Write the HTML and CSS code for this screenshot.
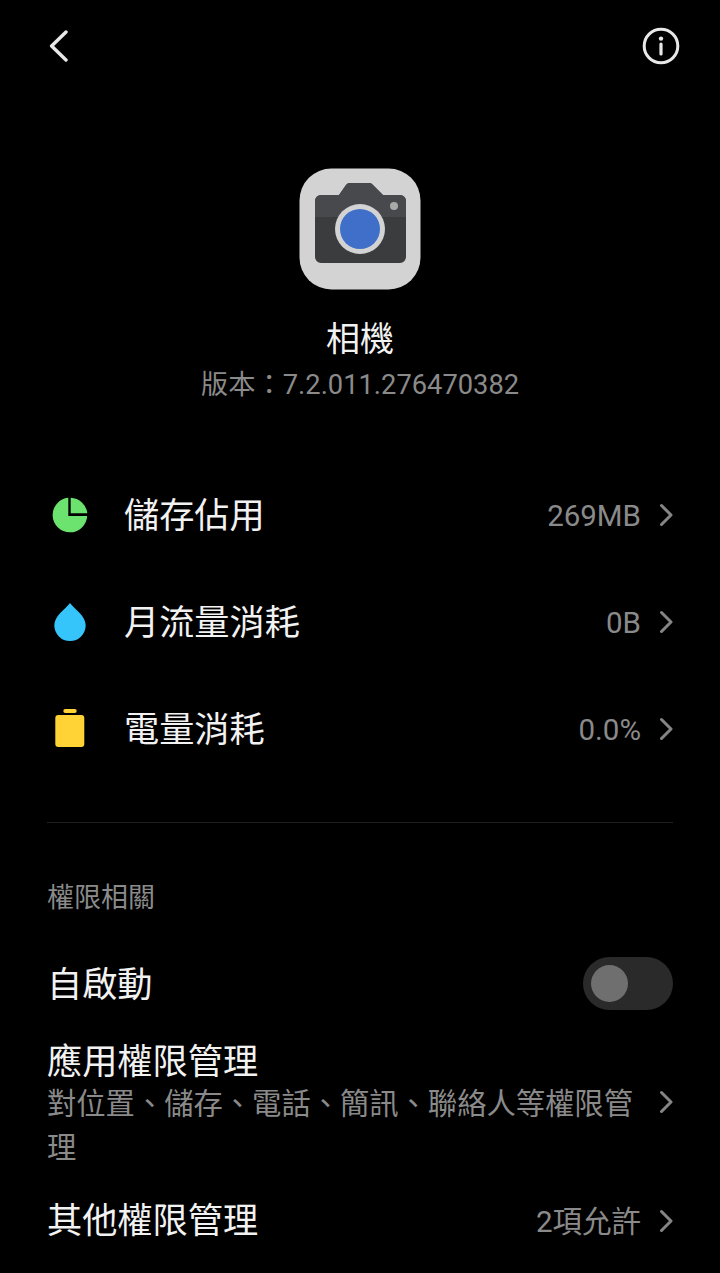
FILE: index.html
```html
<!DOCTYPE html>
<html lang="zh-Hant">
<head>
  <meta charset="UTF-8">
  <meta name="viewport" content="width=device-width, initial-scale=1.0">
  <title>相機</title>
  <link rel="stylesheet" href="styles.css">
</head>
<body>
  <div class="page">
    <header class="top-bar">
      <svg class="top-bar__back" width="20" height="32" viewBox="0 0 20 32"><path d="M17 2 L2.6 16 L17 30" fill="none" stroke="#e8e8e8" stroke-width="3.4" stroke-linecap="round" stroke-linejoin="round"/></svg>
      <svg class="top-bar__info" width="38" height="38" viewBox="0 0 38 38"><circle cx="19" cy="19" r="16.8" fill="none" stroke="#e8e8e8" stroke-width="3"/><circle cx="19" cy="11.6" r="2.2" fill="#e8e8e8"/><path d="M19 17 V27" stroke="#e8e8e8" stroke-width="3.2" stroke-linecap="round"/></svg>
    </header>

    <section class="app-head">
      <svg class="app-head__icon" width="122" height="122" viewBox="0 0 122 122">
        <rect x="0.5" y="0.5" width="121" height="121" rx="32" fill="#d3d3d3"/>
        <path d="M16 33 a6 6 0 0 1 6 -6 H40 L47 17 a5 5 0 0 1 3 -2 H71 a5 5 0 0 1 3 2 L84 27 H101 a6 6 0 0 1 6 6 V89 a6 6 0 0 1 -6 6 H22 a6 6 0 0 1 -6 -6 Z" fill="#3b3c3e"/>
        <path d="M16 33 a6 6 0 0 1 6 -6 H40 L47 17 a5 5 0 0 1 3 -2 H71 a5 5 0 0 1 3 2 L84 27 H101 a6 6 0 0 1 6 6 V49 H16 Z" fill="#47494c"/>
        <circle cx="95" cy="38" r="4" fill="#a9a9a9"/>
        <circle cx="61" cy="61" r="25" fill="#d3d3d3"/>
        <circle cx="61" cy="61" r="20" fill="#3f6fc9"/>
      </svg>
      <h1 class="app-head__name">相機</h1>
      <p class="app-head__version">版本：7.2.011.276470382</p>
    </section>

    <section class="usage">
      <div class="usage-row">
        <svg class="usage-row__icon" width="38" height="38" viewBox="0 0 38 38"><path d="M17.3 1.8 V20 H36.2 A17.3 17.3 0 1 1 17.3 1.8 Z" fill="#6de36f"/><path d="M19.7 1.7 A17.3 17.3 0 0 1 36.3 17.3 H19.7 Z" fill="#6de36f"/></svg>
        <span class="usage-row__label">儲存佔用</span>
        <span class="row-value">269MB</span>
        <svg class="chevron" width="14" height="24" viewBox="0 0 14 24"><path d="M2.5 2.5 L12 12 L2.5 21.5" fill="none" stroke="#858585" stroke-width="3" stroke-linecap="round" stroke-linejoin="round"/></svg>
      </div>
      <div class="usage-row">
        <svg class="usage-row__icon" width="38" height="38" viewBox="0 0 38 38"><path d="M19 0 C24 6.5 34.7 13 34.7 22.3 A15.7 15.7 0 0 1 3.3 22.3 C3.3 13 14 6.5 19 0 Z" fill="#36c5fb"/></svg>
        <span class="usage-row__label">月流量消耗</span>
        <span class="row-value">0B</span>
        <svg class="chevron" width="14" height="24" viewBox="0 0 14 24"><path d="M2.5 2.5 L12 12 L2.5 21.5" fill="none" stroke="#858585" stroke-width="3" stroke-linecap="round" stroke-linejoin="round"/></svg>
      </div>
      <div class="usage-row">
        <svg class="usage-row__icon" width="38" height="40" viewBox="0 0 38 40"><rect x="12.3" y="0" width="13.4" height="4" rx="2" fill="#ffd235"/><rect x="4.3" y="6" width="29" height="32" rx="3" fill="#ffd235"/></svg>
        <span class="usage-row__label">電量消耗</span>
        <span class="row-value">0.0%</span>
        <svg class="chevron" width="14" height="24" viewBox="0 0 14 24"><path d="M2.5 2.5 L12 12 L2.5 21.5" fill="none" stroke="#858585" stroke-width="3" stroke-linecap="round" stroke-linejoin="round"/></svg>
      </div>
    </section>

    <hr class="divider">

    <section class="perms">
      <h2 class="perms__title">權限相關</h2>
      <div class="perm-row perm-row--toggle">
        <span class="perm-row__label">自啟動</span>
        <span class="switch"><span class="switch__knob"></span></span>
      </div>
      <div class="perm-row perm-row--detail">
        <div class="perm-row__text">
          <div class="perm-row__label">應用權限管理</div>
          <div class="perm-row__sub">對位置、儲存、電話、簡訊、聯絡人等權限管理</div>
        </div>
        <svg class="chevron" width="14" height="24" viewBox="0 0 14 24"><path d="M2.5 2.5 L12 12 L2.5 21.5" fill="none" stroke="#858585" stroke-width="3" stroke-linecap="round" stroke-linejoin="round"/></svg>
      </div>
      <div class="perm-row perm-row--last">
        <span class="perm-row__label">其他權限管理</span>
        <span class="row-value">2項允許</span>
        <svg class="chevron" width="14" height="24" viewBox="0 0 14 24"><path d="M2.5 2.5 L12 12 L2.5 21.5" fill="none" stroke="#858585" stroke-width="3" stroke-linecap="round" stroke-linejoin="round"/></svg>
      </div>
    </section>
  </div>
</body>
</html>
```

FILE: styles.css
```css
html, body {
  margin: 0;
  background: #000;
}

body {
  font-family: Roboto, "Noto Sans CJK TC", sans-serif;
  color: #f2f2f2;
}

.page {
  height: 1273px;
  overflow: hidden;
  padding: 0 47px;
  box-sizing: border-box;
}

.top-bar {
  display: flex;
  justify-content: space-between;
  padding: 27px 0 0 2px;
  margin-right: -7px;
  align-items: flex-start;
}

.top-bar__back {
  margin-top: 3px;
}

.app-head {
  display: flex;
  flex-direction: column;
  align-items: center;
  margin-top: 103px;
}

.app-head__icon {
  display: block;
  filter: blur(0.6px);
}

.app-head__name {
  margin: 26px 0 0;
  font-size: 34px;
  line-height: 46px;
  font-weight: 400;
}

.app-head__version {
  margin: 3px 0 0;
  font-size: 27.3px;
  line-height: 40px;
  color: #8a8a8a;
}

.usage {
  margin-top: 56px;
}

.usage-row {
  display: flex;
  align-items: center;
  height: 107px;
}

.usage-row__icon {
  margin-left: 4px;
  margin-right: 35px;
}

.usage-row__label {
  flex: 1;
  font-size: 35.2px;
  line-height: 48px;
  padding-top: 2px;
}

.row-value {
  font-size: 29.5px;
  line-height: 40px;
  padding-top: 2px;
  color: #8a8a8a;
}

.chevron {
  margin-left: 18px;
}

.divider {
  border: 0;
  border-top: 1px solid #1f1f1f;
  margin: 40px 0 0;
}

.perms__title {
  margin: 56px 0 0;
  font-size: 27px;
  line-height: 38px;
  font-weight: 400;
  color: #8a8a8a;
}

.perm-row {
  display: flex;
  align-items: center;
}

.perm-row__label {
  flex: 1;
  font-size: 35.2px;
  line-height: 50px;
}

.perm-row--toggle {
  margin-top: 40px;
  height: 52px;
}

.perm-row--toggle .perm-row__label {
  padding-top: 4px;
}

.switch {
  width: 90px;
  height: 53px;
  border-radius: 27px;
  background: #2a2a2a;
  display: flex;
  align-items: center;
  padding-left: 8px;
  box-sizing: border-box;
}

.switch__knob {
  width: 37px;
  height: 37px;
  border-radius: 50%;
  background: #6f6f6f;
}

.perm-row--detail {
  margin-top: 28px;
}

.perm-row__text {
  width: 590px;
  flex: none;
}

.perm-row__sub {
  font-size: 29.3px;
  line-height: 43.5px;
  color: #8a8a8a;
  margin-top: -4px;
}

.perm-row--detail .chevron {
  margin-left: 22px;
  margin-bottom: 4px;
}

.perm-row--last {
  margin-top: 26px;
}
```
